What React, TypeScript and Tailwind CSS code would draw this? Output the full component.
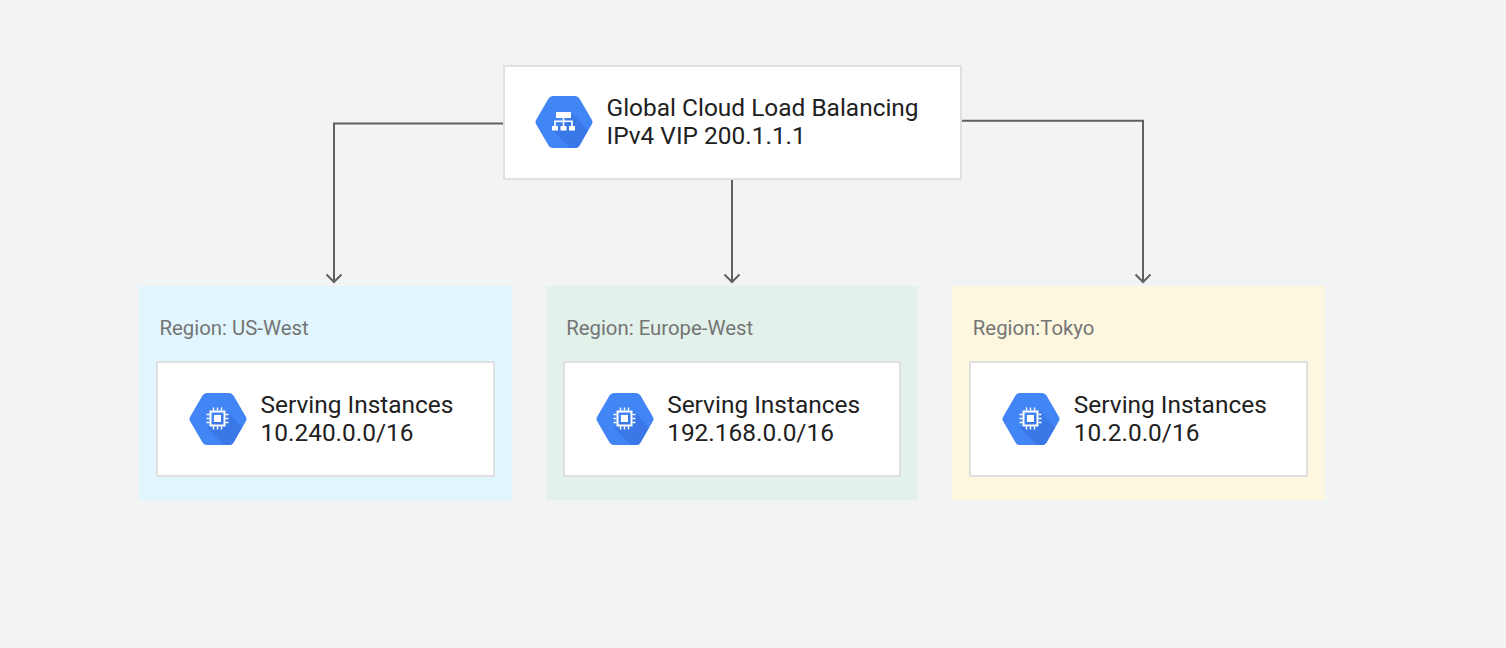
const regions = [
  { label: 'Region: US-West', cidr: '10.240.0.0/16', bg: 'bg-[#e1f5fe]' },
  { label: 'Region: Europe-West', cidr: '192.168.0.0/16', bg: 'bg-[#e2f1ea]' },
  { label: 'Region:Tokyo', cidr: '10.2.0.0/16', bg: 'bg-[#fef7e0]' },
];

const HexBase = ({ children }: { children: React.ReactNode }) => (
  <svg width="58" height="52" viewBox="0 0 58 52" className="shrink-0">
    <path
      d="M13.500 2.600 Q15 0 18 0 H40 Q43 0 44.500 2.600 L56.700 23.400 Q58.300 26 56.700 28.600 L44.500 49.400 Q43 52 40 52 H18 Q15 52 13.500 49.400 L1.300 28.600 Q-0.300 26 1.300 23.400 Z"
      fill="#4285f4"
    />
    <path
      d="M18 35 L35 52 H40 Q43 52 44.500 49.400 L53 34.400 L38 18 Z"
      fill="#3b78e7"
    />
    {children}
  </svg>
);

const BalancerIcon = () => (
  <HexBase>
    <g fill="#fff">
      <rect x="21" y="16" width="15" height="6" />
      <rect x="27.700" y="22" width="1.600" height="3" />
      <rect x="19.200" y="24.500" width="18.600" height="1.600" />
      <rect x="19.200" y="25" width="1.600" height="5" />
      <rect x="36.200" y="25" width="1.600" height="5" />
      <rect x="27.700" y="25" width="1.600" height="5" />
      <rect x="17" y="30" width="6" height="4.500" />
      <rect x="25.500" y="30" width="6" height="4.500" />
      <rect x="34" y="30" width="6" height="4.500" />
    </g>
  </HexBase>
);

const ChipIcon = () => (
  <HexBase>
    <rect x="21.500" y="18.500" width="14" height="14" fill="none" stroke="#fff" strokeWidth="2" />
    <rect x="25" y="22" width="7" height="7" fill="#fff" />
    <path
      d="M24.500 14.500v3M28.500 14.500v3M32.500 14.500v3M24.500 33.500v3M28.500 33.500v3M32.500 33.500v3M17.500 21.500h3M17.500 25.500h3M17.500 29.500h3M36.500 21.500h3M36.500 25.500h3M36.500 29.500h3"
      stroke="#fff"
      strokeWidth="1.400"
    />
  </HexBase>
);

const Connectors = () => (
  <svg
    className="absolute left-0 top-0 pointer-events-none"
    width="1506"
    height="300"
    viewBox="0 0 1506 300"
    fill="none"
    stroke="#616161"
    strokeWidth="2"
  >
    <path d="M503 123.600 H334 V282" />
    <path d="M326.500 274.500 L334 282 L341.500 274.500" />
    <path d="M732 180 V282" />
    <path d="M724.500 274.500 L732 282 L739.500 274.500" />
    <path d="M961 120.700 H1143 V282" />
    <path d="M1135.500 274.500 L1143 282 L1150.500 274.500" />
  </svg>
);

export default function App() {
  return (
    <div
      className="relative h-[648px] w-[1506px] overflow-hidden bg-[#f1f3f4] pt-[64.500px] text-[#212121]"
      style={{ fontFamily: '"Roboto", sans-serif' }}
    >
      <Connectors />

      {/* Load balancer */}
      <div className="relative ml-[502.500px] flex h-[115.500px] w-[459px] items-center border-2 border-[#e0e0e0] bg-white pl-[30.500px]">
        <BalancerIcon />
        <div className="ml-[13.500px] text-[24.450px] leading-[28px]">
          <p>Global Cloud Load Balancing</p>
          <p>IPv4 VIP 200.1.1.1</p>
        </div>
      </div>

      {/* Regions */}
      <div className="relative ml-[139px] mt-[106px] grid w-[1186px] grid-cols-3 gap-[34px]">
        {regions.map((region) => (
          <div key={region.label} className={`h-[214px] ${region.bg} pl-[17px] pt-[30px]`}>
            <p className="pl-[3.500px] text-[20.350px] leading-[24px] text-[#757575]">{region.label}</p>
            <div className="mt-[21px] flex h-[115.500px] w-[338.500px] items-center border-2 border-[#e0e0e0] bg-white pl-[31px]">
              <ChipIcon />
              <div className="ml-[13.500px] text-[24.450px] leading-[28px]">
                <p>Serving Instances</p>
                <p>{region.cidr}</p>
              </div>
            </div>
          </div>
        ))}
      </div>
    </div>
  );
}
